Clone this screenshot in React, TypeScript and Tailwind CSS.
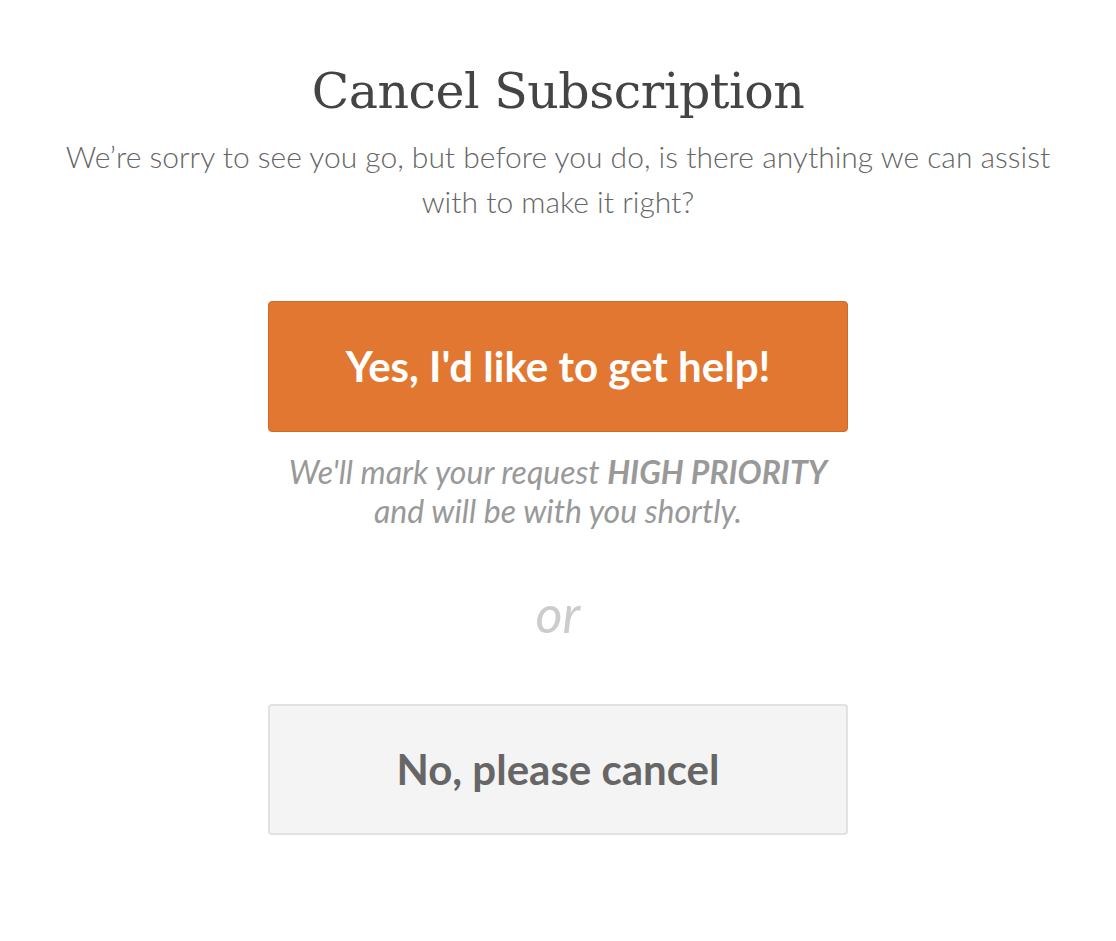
import React from 'react';

const lato = { fontFamily: 'Lato, "Open Sans", sans-serif' };

const App: React.FC = () => {
    return (
        <div className="w-[1116px] h-[941px] bg-white flex flex-col items-center" style={lato}>
            {/* Heading */}
            <h1
                className="mt-[62px] text-[49px] leading-[60px] text-[#444] tracking-[-0.5px]"
                style={{ fontFamily: '"DejaVu Serif", "Liberation Serif", serif' }}
            >
                Cancel Subscription
            </h1>
            <p className="mt-[12px] w-[1000px] text-center text-[30px] leading-[45px] font-light text-[#666]">
                We’re sorry to see you go, but before you do, is there anything we can assist with to make it right?
            </p>

            {/* Help button */}
            <button className="mt-[77px] w-[580px] h-[131px] rounded-[4px] bg-[#e27731] border border-[#cf6a28] text-white text-[42px] font-bold flex items-center justify-center">
                Yes, I'd like to get help!
            </button>
            <p className="mt-[20px] text-center italic text-[32px] leading-[39px] text-[#999]">
                We'll mark your request <span className="font-bold">HIGH PRIORITY</span>
                <br />
                and will be with you shortly.
            </p>

            <div className="mt-[53px] italic text-[52px] leading-[60px] text-[#ccc]">or</div>

            {/* Cancel button */}
            <button className="mt-[61px] w-[580px] h-[131px] rounded-[4px] bg-[#f4f4f4] border-2 border-[#e2e2e2] text-[#666] text-[42px] font-bold flex items-center justify-center">
                No, please cancel
            </button>
        </div>
    );
};

export default App;
